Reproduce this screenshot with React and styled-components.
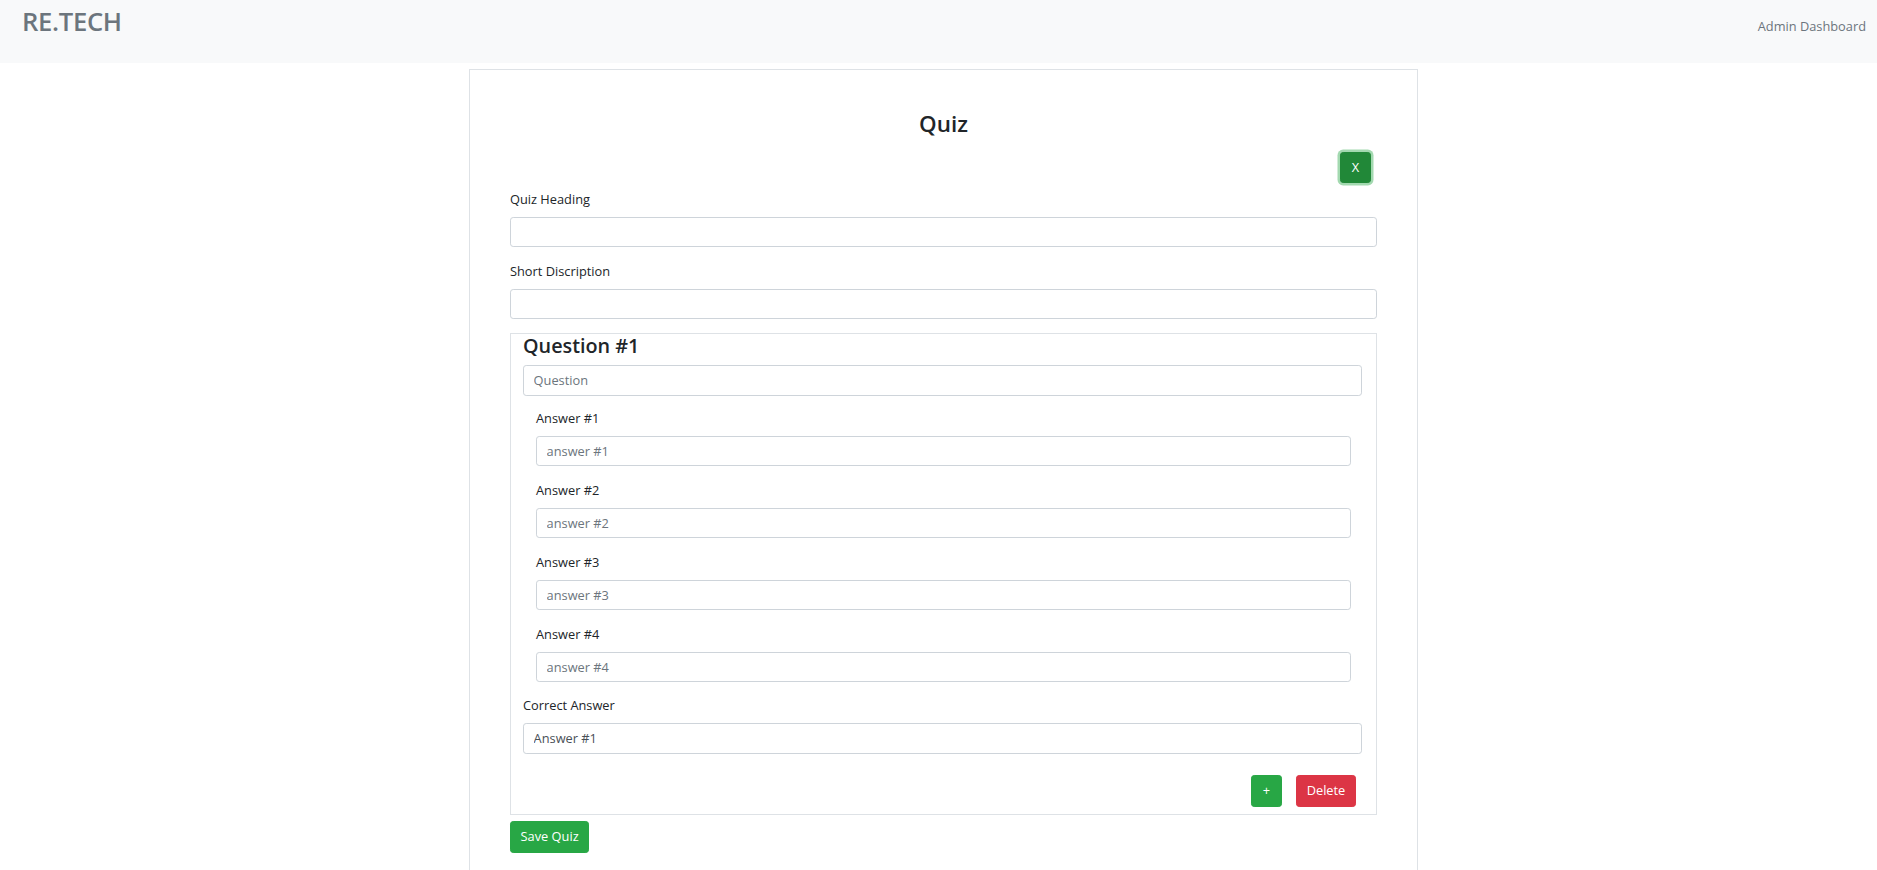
import React from "react";
import styled, { createGlobalStyle } from "styled-components";

const GlobalStyle = createGlobalStyle`
  * { box-sizing: border-box; }
  body {
    margin: 0;
    background: #ffffff;
    font-family: "Open Sans", "Noto Sans", sans-serif;
    font-size: 12.8px;
    line-height: 1.5;
    color: #212529;
  }
`;

const Navbar = styled.nav`
  display: flex;
  justify-content: space-between;
  align-items: flex-start;
  height: 63px;
  padding: 7px 11px 0 22px;
  background: #f8f9fa;
`;

const Brand = styled.div`
  font-size: 25.6px;
  line-height: 1.2;
  font-weight: 600;
  color: #6c757d;
  letter-spacing: -0.3px;
`;

const NavLink = styled.a`
  margin-top: 10px;
  font-size: 12.8px;
  color: #6c757d;
  text-decoration: none;
`;

const Page = styled.main`
  padding: 6px 0 0 469px;
`;

const Card = styled.section`
  width: 949px;
  border: 1px solid #dee2e6;
  padding: 41px 40px 40px 40px;
`;

const Title = styled.h3`
  margin: 0 0 14px;
  text-align: center;
  font-size: 22.4px;
  line-height: 1.2;
  font-weight: 600;
  color: #212529;
`;

const ToolbarRow = styled.div`
  display: flex;
  justify-content: flex-end;
  padding-right: 6px;
  margin-bottom: 7px;
`;

const Button = styled.button`
  display: inline-flex;
  align-items: center;
  justify-content: center;
  height: ${(p) => p.$h || 31}px;
  min-width: ${(p) => p.$w || 0}px;
  padding: 0 9.6px;
  border: 1px solid ${(p) => p.$bg};
  border-radius: 3.2px;
  background: ${(p) => p.$bg};
  color: #ffffff;
  font-family: inherit;
  font-size: 12.8px;
  line-height: 1.5;
  cursor: pointer;
  box-shadow: ${(p) => (p.$focus ? "0 0 0 2.5px rgba(72, 180, 97, 0.5)" : "none")};
`;

const Field = styled.div`
  margin-bottom: ${(p) => (p.$mb != null ? p.$mb : 15)}px;
  padding: ${(p) => p.$pad || "0"};
`;

const Label = styled.label`
  display: block;
  margin-bottom: 8px;
  font-size: 12.8px;
  line-height: 19px;
  color: #212529;
`;

const Input = styled.input`
  display: block;
  width: 100%;
  height: ${(p) => p.$h || 30}px;
  padding: 0 9.6px;
  border: 1px solid #ced4da;
  border-radius: 3.2px;
  background: #ffffff;
  font-family: inherit;
  font-size: 12.8px;
  color: #495057;
  outline: none;
  &::placeholder { color: #6c757d; opacity: 1; }
`;

const QuestionBox = styled.div`
  border: 1px solid #dee2e6;
  padding: 0 14px 7px 12px;
  margin-bottom: 6px;
`;

const QuestionHeading = styled.h4`
  margin: 0 0 8px;
  font-size: 19.8px;
  line-height: 23px;
  font-weight: 600;
  color: #212529;
`;

const ActionRow = styled.div`
  display: flex;
  justify-content: flex-end;
  gap: 14px;
  padding-right: 6px;
  margin-top: 21px;
`;

const answers = [1, 2, 3, 4];

export default function App() {
  return (
    <>
      <GlobalStyle />
      <Navbar>
        <Brand>RE.TECH</Brand>
        <NavLink href="#">Admin Dashboard</NavLink>
      </Navbar>
      <Page>
        <Card>
          <Title>Quiz</Title>
          <ToolbarRow>
            <Button $bg="#218838" $w={31} $focus>X</Button>
          </ToolbarRow>
          <Field>
            <Label>Quiz Heading</Label>
            <Input />
          </Field>
          <Field $mb={14}>
            <Label>Short Discription</Label>
            <Input />
          </Field>
          <QuestionBox>
            <QuestionHeading>Question #1</QuestionHeading>
            <Field $mb={13}>
              <Input $h={31} placeholder="Question" />
            </Field>
            {answers.map((n) => (
              <Field key={n} $pad="0 11px 0 13px" $mb={n === 4 ? 14 : 15}>
                <Label>Answer #{n}</Label>
                <Input placeholder={`answer #${n}`} />
              </Field>
            ))}
            <Field $mb={0}>
              <Label>Correct Answer</Label>
              <Input $h={31} defaultValue="Answer #1" />
            </Field>
            <ActionRow>
              <Button $bg="#28a745" $w={31} $h={32}>+</Button>
              <Button $bg="#dc3545" $w={60} $h={32}>Delete</Button>
            </ActionRow>
          </QuestionBox>
          <Button $bg="#28a745" $w={79} $h={32}>Save Quiz</Button>
        </Card>
      </Page>
    </>
  );
}
